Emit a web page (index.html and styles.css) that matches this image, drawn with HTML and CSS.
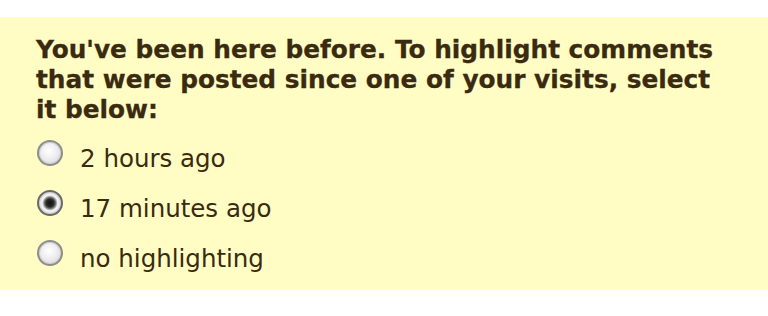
FILE: index.html
```html
<!DOCTYPE html>
<html>
<head>
<meta charset="utf-8">
<link rel="stylesheet" href="styles.css">
</head>
<body>
<div class="box">
  <p class="intro">You've been here before. To highlight comments that were posted since one of your visits, select it below:</p>
  <ul class="options">
    <li class="option"><span class="radio"></span><span class="label">2 hours ago</span></li>
    <li class="option"><span class="radio checked"></span><span class="label">17 minutes ago</span></li>
    <li class="option"><span class="radio"></span><span class="label">no highlighting</span></li>
  </ul>
</div>
</body>
</html>
```
FILE: styles.css
```css
html, body {
  margin: 0;
  padding: 0;
  background: #ffffff;
}
body {
  font-family: "DejaVu Sans", Verdana, sans-serif;
  color: #3a2a10;
}
.box {
  margin-top: 17px;
  height: 273px;
  box-sizing: border-box;
  background: #fffdc4;
  padding: 18px 0 0 36px;
}
.intro {
  margin: 0;
  font-weight: bold;
  font-size: 24.8px;
  line-height: 30px;
  width: 690px;
  -webkit-text-stroke: 0.3px #3a2a10;
}
.options {
  list-style: none;
  margin: 9px 0 0 0;
  padding: 0;
  display: flex;
  flex-direction: column;
}
.option {
  display: flex;
  align-items: center;
  height: 50px;
}
.radio {
  width: 26px;
  height: 26px;
  box-sizing: border-box;
  border-radius: 50%;
  border: 2px solid #8e8e8a;
  background: radial-gradient(circle at 45% 40%, #ffffff 0%, #f2f2f4 35%, #dcdce0 80%, #c4c4c8 100%);
  box-shadow: inset 0 0 0 1px #d0d0d0;
  margin: 0 17px 0 1px;
  position: relative;
  top: -6px;
  flex: none;
}
.radio.checked {
  border-color: #6a6a6a;
  background: radial-gradient(circle at 50% 50%, #111 0%, #2a2a2a 25%, #6e6e6e 36%, #f4f4f4 50%, #e0e0e0 75%, #b8b8b8 100%);
}
.label {
  font-size: 24.5px;
  line-height: 30px;
}
```
